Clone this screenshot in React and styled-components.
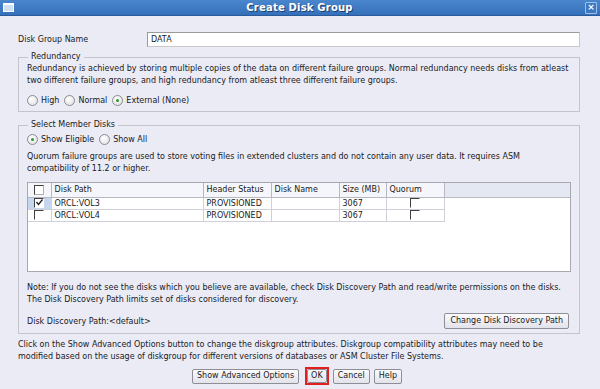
import React from "react";
import styled, { createGlobalStyle } from "styled-components";

const Global = createGlobalStyle`
  html, body { margin: 0; padding: 0; }
  body {
    font-family: "DejaVu Sans", "Liberation Sans", sans-serif;
    font-size: 8px;
    color: #1a1a1a;
  }
`;

const Window = styled.div`
  width: 600px;
  height: 389px;
  background: #ebebf6;
  display: flex;
  flex-direction: column;
  overflow: hidden;
`;

const TitleBar = styled.div`
  height: 15px;
  background: linear-gradient(#4a86cc, #3570bb);
  border-bottom: 1px solid #2a5a9a;
  display: flex;
  align-items: center;
  justify-content: space-between;
  padding: 0 3px;
`;

const Title = styled.div`
  color: #fff;
  font-weight: bold;
  font-size: 10px;
  text-shadow: 1px 1px 0 #1c3f70;
  letter-spacing: 0.2px;
`;

const WinIcon = styled.div`
  width: 9px;
  height: 6px;
  border: 1px solid #fff;
  background: #cfe0f5;
  border-top-width: 2px;
`;

const CloseBox = styled.div`
  width: 10px;
  height: 10px;
  border: 1px solid #9fc0e8;
  border-radius: 1px;
  background: #3d78c2;
  display: flex;
  align-items: center;
  justify-content: center;
  color: #fff;
  font-weight: bold;
  font-size: 9px;
  line-height: 1;
`;

const Body = styled.div`
  padding: 15px 20px 0 18px;
  display: flex;
  flex-direction: column;
`;

const NameRow = styled.div`
  display: flex;
  align-items: center;
  height: 16px;
`;

const Label = styled.div`
  width: 129px;
`;

const TextInput = styled.div`
  flex: 1;
  height: 13px;
  background: #fff;
  border: 1px solid #9a9a9a;
  border-right-color: #c8c8c8;
  border-bottom-color: #c8c8c8;
  padding-left: 3px;
  display: flex;
  align-items: center;
`;

const Group = styled.fieldset`
  margin: ${(p) => p.$top}px 0 0 0;
  padding: 0 8px ${(p) => p.$bottom}px 8px;
  border: 1px solid #c4c4cc;
  display: flex;
  flex-direction: column;
  min-width: 0;
`;

const Legend = styled.legend`
  padding: 0 3px;
  margin-left: 1px;
  line-height: 10px;
`;

const Para = styled.div`
  line-height: 12px;
  margin-top: ${(p) => p.$mt || 0}px;
`;

const RadioRow = styled.div`
  display: flex;
  align-items: center;
  gap: 5px;
  margin-top: ${(p) => p.$mt || 0}px;
  height: 12px;
`;

const RadioItem = styled.label`
  display: flex;
  align-items: center;
  gap: 3px;
`;

const RadioCircle = styled.span`
  width: 9px;
  height: 9px;
  border-radius: 50%;
  border: 1px solid #8c8c8c;
  background: radial-gradient(circle at 40% 35%, #ffffff, #dcdce2);
  display: flex;
  align-items: center;
  justify-content: center;
  &::after {
    content: "";
    width: 3px;
    height: 3px;
    border-radius: 50%;
    background: ${(p) => (p.$on ? "#2a9a2a" : "transparent")};
  }
`;

const TableBox = styled.div`
  margin-top: 7px;
  height: 90px;
  background: #fff;
  border: 1px solid #a8a8b0;
  box-sizing: border-box;
`;

const Grid = styled.table`
  border-collapse: collapse;
  table-layout: fixed;
  width: 100%;
  font-size: 8px;
`;

const Th = styled.th`
  box-sizing: border-box;
  font-weight: normal;
  height: 14px;
  padding: 0 3px;
  background: #f4f6fb;
  border-right: 1px solid #b8b8c0;
  border-bottom: 1px solid #b8b8c0;
  width: ${(p) => (p.$w ? p.$w + "px" : "auto")};
  text-align: ${(p) => (p.$center ? "center" : "left")};
  white-space: nowrap;
  overflow: hidden;
  &:last-child {
    border-right: none;
    background: #e4e8f2;
  }
`;

const Td = styled.td`
  height: 11px;
  padding: 0 3px;
  border-right: 1px solid #d0d0d8;
  border-bottom: 1px solid #d0d0d8;
  text-align: ${(p) => (p.$center ? "center" : "left")};
  background: ${(p) => (p.$sel ? "#c6d6ee" : "#fff")};
  white-space: nowrap;
  &:last-child {
    border: none;
    background: #fff;
  }
`;

const Check = styled.span`
  display: inline-block;
  width: 8px;
  height: 8px;
  vertical-align: middle;
  border-top: 1px solid #404040;
  border-left: 1px solid #404040;
  border-right: 1px solid ${(p) => (p.$boxed ? "#b0b0b0" : "#ffffff")};
  border-bottom: 1px solid ${(p) => (p.$boxed ? "#b0b0b0" : "#ffffff")};
  background: #fff;
  position: relative;
`;

const Tick = styled.svg`
  position: absolute;
  left: 0;
  top: -1px;
`;

const FooterRow = styled.div`
  display: flex;
  align-items: center;
  justify-content: space-between;
  margin-top: 7px;
  padding-right: 2px;
`;

const Button = styled.button`
  font-family: inherit;
  font-size: 8px;
  color: #1a1a1a;
  height: ${(p) => p.$h || 15}px;
  padding: 0 ${(p) => p.$px || 4}px;
  background: linear-gradient(#fbfbfd, #e2e2ea);
  border: 1px solid #8e8e96;
  border-radius: 2px;
  cursor: pointer;
  line-height: 1;
`;

const Highlight = styled.div`
  border: 2px solid #e02020;
  display: flex;
  margin-left: 2px;
`;

const Actions = styled.div`
  display: flex;
  align-items: center;
  justify-content: flex-end;
  gap: 4px;
  margin-top: 4px;
  padding-right: 178px;
`;

const Radio = ({ on, children }) => (
  <RadioItem>
    <RadioCircle $on={on} />
    {children}
  </RadioItem>
);

const Box = ({ checked, boxed }) => (
  <Check $boxed={boxed}>
    {checked && (
      <Tick width="9" height="9" viewBox="0 0 9 9">
        <path d="M1.5 4 L3.5 6.5 L7.5 1.5" stroke="#202020" strokeWidth="1.3" fill="none" />
      </Tick>
    )}
  </Check>
);

const disks = [
  { path: "ORCL:VOL3", status: "PROVISIONED", size: "3067", checked: true },
  { path: "ORCL:VOL4", status: "PROVISIONED", size: "3067", checked: false },
];

export default function App() {
  return (
    <Window>
      <Global />
      <TitleBar>
        <WinIcon />
        <Title>Create Disk Group</Title>
        <CloseBox>×</CloseBox>
      </TitleBar>
      <Body>
        <NameRow>
          <Label>Disk Group Name</Label>
          <TextInput>DATA</TextInput>
        </NameRow>

        <Group $top={5} $bottom={5}>
          <Legend>Redundancy</Legend>
          <Para $mt={1}>
            Redundancy is achieved by storing multiple copies of the data on different failure groups. Normal redundancy needs disks from atleast
            <br />
            two different failure groups, and high redundancy from atleast three different failure groups.
          </Para>
          <RadioRow $mt={7}>
            <Radio>High</Radio>
            <Radio>Normal</Radio>
            <Radio on>External (None)</Radio>
          </RadioRow>
        </Group>

        <Group $top={8} $bottom={4}>
          <Legend>Select Member Disks</Legend>
          <RadioRow $mt={3}>
            <Radio on>Show Eligible</Radio>
            <Radio>Show All</Radio>
          </RadioRow>
          <Para $mt={6}>
            Quorum failure groups are used to store voting files in extended clusters and do not contain any user data. It requires ASM
            <br />
            compatibility of 11.2 or higher.
          </Para>
          <TableBox>
            <Grid>
              <thead>
                <tr>
                  <Th $w={23} $center>
                    <Box boxed />
                  </Th>
                  <Th $w={152}>Disk Path</Th>
                  <Th $w={68}>Header Status</Th>
                  <Th $w={68}>Disk Name</Th>
                  <Th $w={47}>Size (MB)</Th>
                  <Th $w={58}>Quorum</Th>
                  <Th />
                </tr>
              </thead>
              <tbody>
                {disks.map((d) => (
                  <tr key={d.path}>
                    <Td $center $sel={d.checked}>
                      <Box checked={d.checked} />
                    </Td>
                    <Td>{d.path}</Td>
                    <Td>{d.status}</Td>
                    <Td />
                    <Td>{d.size}</Td>
                    <Td $center>
                      <Box />
                    </Td>
                    <Td />
                  </tr>
                ))}
              </tbody>
            </Grid>
          </TableBox>
          <Para $mt={10}>
            Note: If you do not see the disks which you believe are available, check Disk Discovery Path and read/write permissions on the disks.
            <br />
            The Disk Discovery Path limits set of disks considered for discovery.
          </Para>
          <FooterRow>
            <span>Disk Discovery Path:&lt;default&gt;</span>
            <Button $h={16} $px={5}>Change Disk Discovery Path</Button>
          </FooterRow>
        </Group>

        <Para $mt={5}>
          Click on the Show Advanced Options button to change the diskgroup attributes. Diskgroup compatibility attributes may need to be
          <br />
          modified based on the usage of diskgroup for different versions of databases or ASM Cluster File Systems.
        </Para>
        <Actions>
          <Button>Show Advanced Options</Button>
          <Highlight>
            <Button $h={14} $px={3}>OK</Button>
          </Highlight>
          <Button>Cancel</Button>
          <Button>Help</Button>
        </Actions>
      </Body>
    </Window>
  );
}
